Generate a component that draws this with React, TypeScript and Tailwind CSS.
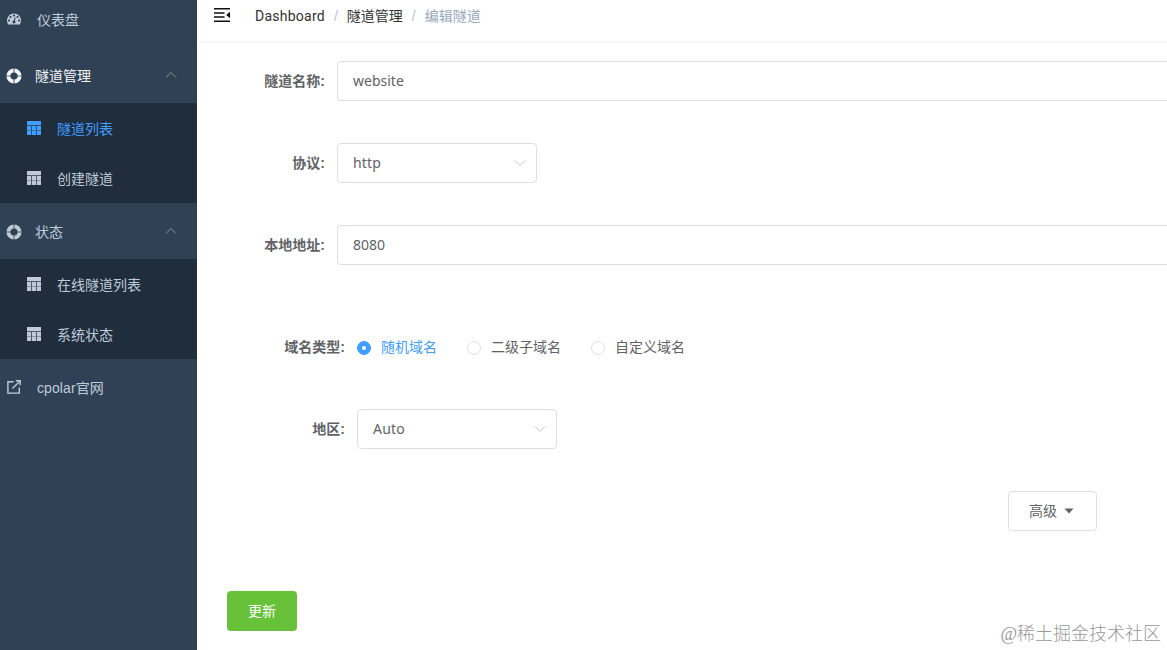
import React from 'react';

const TableIcon = () => (
  <svg width="14" height="14" viewBox="0 0 14 14" fill="currentColor" className="shrink-0">
    <path d="M0 0h14v4H0z" />
    <path d="M0 5h4v4H0zM5 5h4v4H5zM10 5h4v4h-4zM0 9.5h4V14H0zM5 9.5h4V14H5zM10 9.5h4V14h-4z" />
    <path d="M0 4h14v10H0z" opacity="0.3" />
  </svg>
);

const DashboardIcon = () => (
  <svg width="14" height="14" viewBox="0 0 128 100" fill="currentColor" className="shrink-0">
    <path d="M27.429 63.638c0-2.508-.893-4.65-2.679-6.424-1.786-1.775-3.94-2.662-6.464-2.662-2.524 0-4.679.887-6.465 2.662-1.785 1.774-2.678 3.916-2.678 6.424 0 2.508.893 4.65 2.678 6.424 1.786 1.775 3.94 2.662 6.465 2.662 2.524 0 4.678-.887 6.464-2.662 1.786-1.775 2.679-3.916 2.679-6.424zm13.714-31.801c0-2.508-.893-4.65-2.679-6.424-1.785-1.775-3.94-2.662-6.464-2.662-2.524 0-4.679.887-6.464 2.662-1.786 1.774-2.679 3.916-2.679 6.424 0 2.508.893 4.65 2.679 6.424 1.785 1.774 3.94 2.662 6.464 2.662 2.524 0 4.679-.888 6.464-2.662 1.786-1.775 2.679-3.916 2.679-6.424zM71.714 65.98l7.215-27.116c.285-1.23.107-2.378-.536-3.443-.643-1.064-1.56-1.762-2.75-2.094-1.19-.33-2.333-.177-3.429.462-1.095.639-1.81 1.573-2.143 2.804l-7.214 27.116c-2.857.237-5.405 1.266-7.643 3.088-2.238 1.822-3.738 4.152-4.5 6.992-.952 3.644-.476 7.098 1.429 10.364 1.905 3.265 4.69 5.37 8.357 6.317 3.667.947 7.143.474 10.429-1.42 3.285-1.892 5.404-4.66 6.357-8.305.762-2.84.619-5.607-.429-8.305-1.047-2.697-2.762-4.85-5.143-6.46zm47.143-2.342c0-2.508-.893-4.65-2.678-6.424-1.786-1.775-3.94-2.662-6.465-2.662-2.524 0-4.678.887-6.464 2.662-1.786 1.774-2.679 3.916-2.679 6.424 0 2.508.893 4.65 2.679 6.424 1.786 1.775 3.94 2.662 6.464 2.662 2.524 0 4.679-.887 6.465-2.662 1.785-1.775 2.678-3.916 2.678-6.424zm-45.714-45.43c0-2.509-.893-4.65-2.679-6.425C68.68 10.01 66.524 9.122 64 9.122c-2.524 0-4.679.887-6.464 2.661-1.786 1.775-2.679 3.916-2.679 6.425 0 2.508.893 4.65 2.679 6.424 1.785 1.774 3.94 2.662 6.464 2.662 2.524 0 4.679-.888 6.464-2.662 1.786-1.775 2.679-3.916 2.679-6.424zm32 13.629c0-2.508-.893-4.65-2.679-6.424-1.785-1.775-3.94-2.662-6.464-2.662-2.524 0-4.679.887-6.464 2.662-1.786 1.774-2.679 3.916-2.679 6.424 0 2.508.893 4.65 2.679 6.424 1.785 1.774 3.94 2.662 6.464 2.662 2.524 0 4.679-.888 6.464-2.662 1.786-1.775 2.679-3.916 2.679-6.424zM128 63.638c0 12.351-3.357 23.78-10.071 34.286-.905 1.372-2.19 2.058-3.858 2.058H13.93c-1.667 0-2.953-.686-3.858-2.058C3.357 87.465 0 76.037 0 63.638c0-8.613 1.69-16.847 5.071-24.703C8.452 31.08 13 24.312 18.714 18.634c5.715-5.68 12.524-10.199 20.429-13.559C47.048 1.715 55.333.035 64 .035c8.667 0 16.952 1.68 24.857 5.04 7.905 3.36 14.714 7.88 20.429 13.559 5.714 5.678 10.262 12.446 13.643 20.301 3.38 7.856 5.071 16.09 5.071 24.703z" />
  </svg>
);

const HelpIcon = () => (
  <svg width="16" height="16" viewBox="0 0 16 16" fill="none" className="shrink-0">
    <circle cx="8" cy="8" r="5.6" stroke="currentColor" strokeWidth="4" />
    <path d="M8 0v5M8 11v5M0 8h5M11 8h5" stroke="#304156" strokeWidth="1.1" opacity="0.75" />
  </svg>
);

const LinkIcon = () => (
  <svg width="14" height="14" viewBox="0 0 14 14" fill="none" stroke="currentColor" strokeWidth="1.4" className="shrink-0">
    <path d="M6.5 1.7H.9v11.4h11.4V7.4M5.4 8.6L12.8 1.2" />
    <path d="M8.8.8h4.4v4.4" />
  </svg>
);

const Arrow = ({ up = false, className = '' }: { up?: boolean; className?: string }) => (
  <svg width="12" height="8" viewBox="0 0 12 8" fill="none" stroke="currentColor" className={className}>
    <path d={up ? 'M1.2 6.3L6 1.5l4.8 4.8' : 'M1 1.5l5 5 5-5'} />
  </svg>
);

const SubMenu = ({ title, items, active = false }: { title: string; items: string[]; active?: boolean }) => (
  <div>
    <div className={`h-14 pt-0.5 flex items-center pl-1.5 pr-[20px] ${active ? 'text-[#f4f4f5]' : ''}`}>
      <HelpIcon />
      <span className="ml-[13px] flex-1">{title}</span>
      <Arrow up className="text-[#909399] mb-[3px]" />
    </div>
    <div className="bg-[#1f2d3d]">
      {items.map((item) => (
        <div key={item} className={`h-[50px] flex items-center pl-[27px] ${item === '隧道列表' ? 'text-[#409eff]' : ''}`}>
          <TableIcon />
          <span className="ml-4 pt-0.5">{item}</span>
        </div>
      ))}
    </div>
  </div>
);

const inputClass = "h-10 border border-[#dcdfe6] rounded flex items-center pl-[15px] text-[14px] font-['Noto_Sans','Noto_Sans_CJK_SC',sans-serif]";

const FormRow = ({ label, width, children }: { label: string; width: string; children: React.ReactNode }) => (
  <div className="flex items-center h-10">
    <div className={`${width} pr-3 text-right font-bold shrink-0`}>{label}</div>
    {children}
  </div>
);

const Select = ({ value }: { value: string }) => (
  <div className={`${inputClass} w-[200px] justify-between pr-[10px] tracking-[0.2px]`}>
    {value}
    <Arrow className="text-[#c0c4cc]" />
  </div>
);

const Radio = ({ label, checked = false }: { label: string; checked?: boolean }) => (
  <div className={`flex items-center mr-[30px] ${checked ? 'text-[#409eff]' : ''}`}>
    <span className={`w-3.5 h-3.5 mt-0.5 rounded-full border flex items-center justify-center ${checked ? 'bg-[#409eff] border-[#409eff]' : 'border-[#dcdfe6]'}`}>
      {checked && <span className="w-1 h-1 rounded-full bg-white" />}
    </span>
    <span className="ml-2.5">{label}</span>
  </div>
);

export default function App() {
  return (
    <div className="w-full h-[650px] flex overflow-hidden relative text-[14px] leading-5 text-[#606266] bg-white font-['Liberation_Sans','Noto_Sans_CJK_SC',sans-serif]">
      <aside className="w-[197px] shrink-0 bg-[#304156] text-[#bfcbd9]">
        <div className="-mt-[9px] h-14 flex items-center pl-[7px]">
          <DashboardIcon />
          <span className="ml-4 pt-0.5">仪表盘</span>
        </div>
        <SubMenu title="隧道管理" items={['隧道列表', '创建隧道']} active />
        <SubMenu title="状态" items={['在线隧道列表', '系统状态']} />
        <div className="h-14 flex items-center pl-[7px]">
          <LinkIcon />
          <span className="ml-4 pt-0.5 tracking-[0.1px]">cpolar官网</span>
        </div>
      </aside>

      <main className="flex-1 min-w-0">
        <header className="h-[41px] pb-[9px] flex items-center pl-[17px] shadow-[0_1px_3px_rgba(0,21,41,0.08)]">
          <svg width="16" height="14" viewBox="0 0 16 14" fill="#111" className="-mt-0.5">
            <path d="M0 0h16v1.5H0zM0 4.2h10.5v1.5H0zM0 8.3h10.5v1.5H0zM0 12.5h16V14H0zM16 3.7v6.6L12.2 7z" />
          </svg>
          <nav className="ml-[25px] flex items-center text-[#303133]">
            <span className="font-['Roboto',sans-serif] tracking-[0.25px]">Dashboard</span>
            <span className="mx-[9px] text-[#c0c4cc]">/</span>
            <span>隧道管理</span>
            <span className="mx-[9px] text-[#c0c4cc]">/</span>
            <span className="text-[#97a8be]">编辑隧道</span>
          </nav>
        </header>

        <div className="pt-5 pl-[30px]">
          <div className="flex flex-col gap-[42px]">
            <FormRow label="隧道名称:" width="w-[110px]">
              <div className={`${inputClass} flex-1 rounded-r-none border-r-0`}>website</div>
            </FormRow>
            <FormRow label="协议:" width="w-[110px]"><Select value="http" /></FormRow>
            <FormRow label="本地地址:" width="w-[110px]">
              <div className={`${inputClass} flex-1 rounded-r-none border-r-0`}>8080</div>
            </FormRow>
          </div>

          <div className="flex flex-col gap-[42px] mt-[62px] pl-5">
            <FormRow label="域名类型:" width="w-[110px]">
              <Radio label="随机域名" checked />
              <Radio label="二级子域名" />
              <Radio label="自定义域名" />
            </FormRow>
            <FormRow label="地区:" width="w-[110px]"><Select value="Auto" /></FormRow>
          </div>

          <div className="flex justify-end mt-[42px] pr-[70px]">
            <button className="w-[89px] h-10 pl-5 flex items-center border border-[#dcdfe6] rounded">
              高级
              <svg width="10" height="6" viewBox="0 0 10 6" fill="#606266" className="ml-[7px]"><path d="M.5.5h9L5 5.5z" /></svg>
            </button>
          </div>

          <button className="mt-[60px] w-[70px] h-10 rounded bg-[#67c23a] text-white">更新</button>
        </div>
      </main>

      <div className="absolute right-[6px] bottom-[4px] text-[18px] leading-6 whitespace-nowrap text-[#999] font-['Liberation_Serif','Noto_Sans_CJK_SC',sans-serif] font-light">
        @稀土掘金技术社区
      </div>
    </div>
  );
}
